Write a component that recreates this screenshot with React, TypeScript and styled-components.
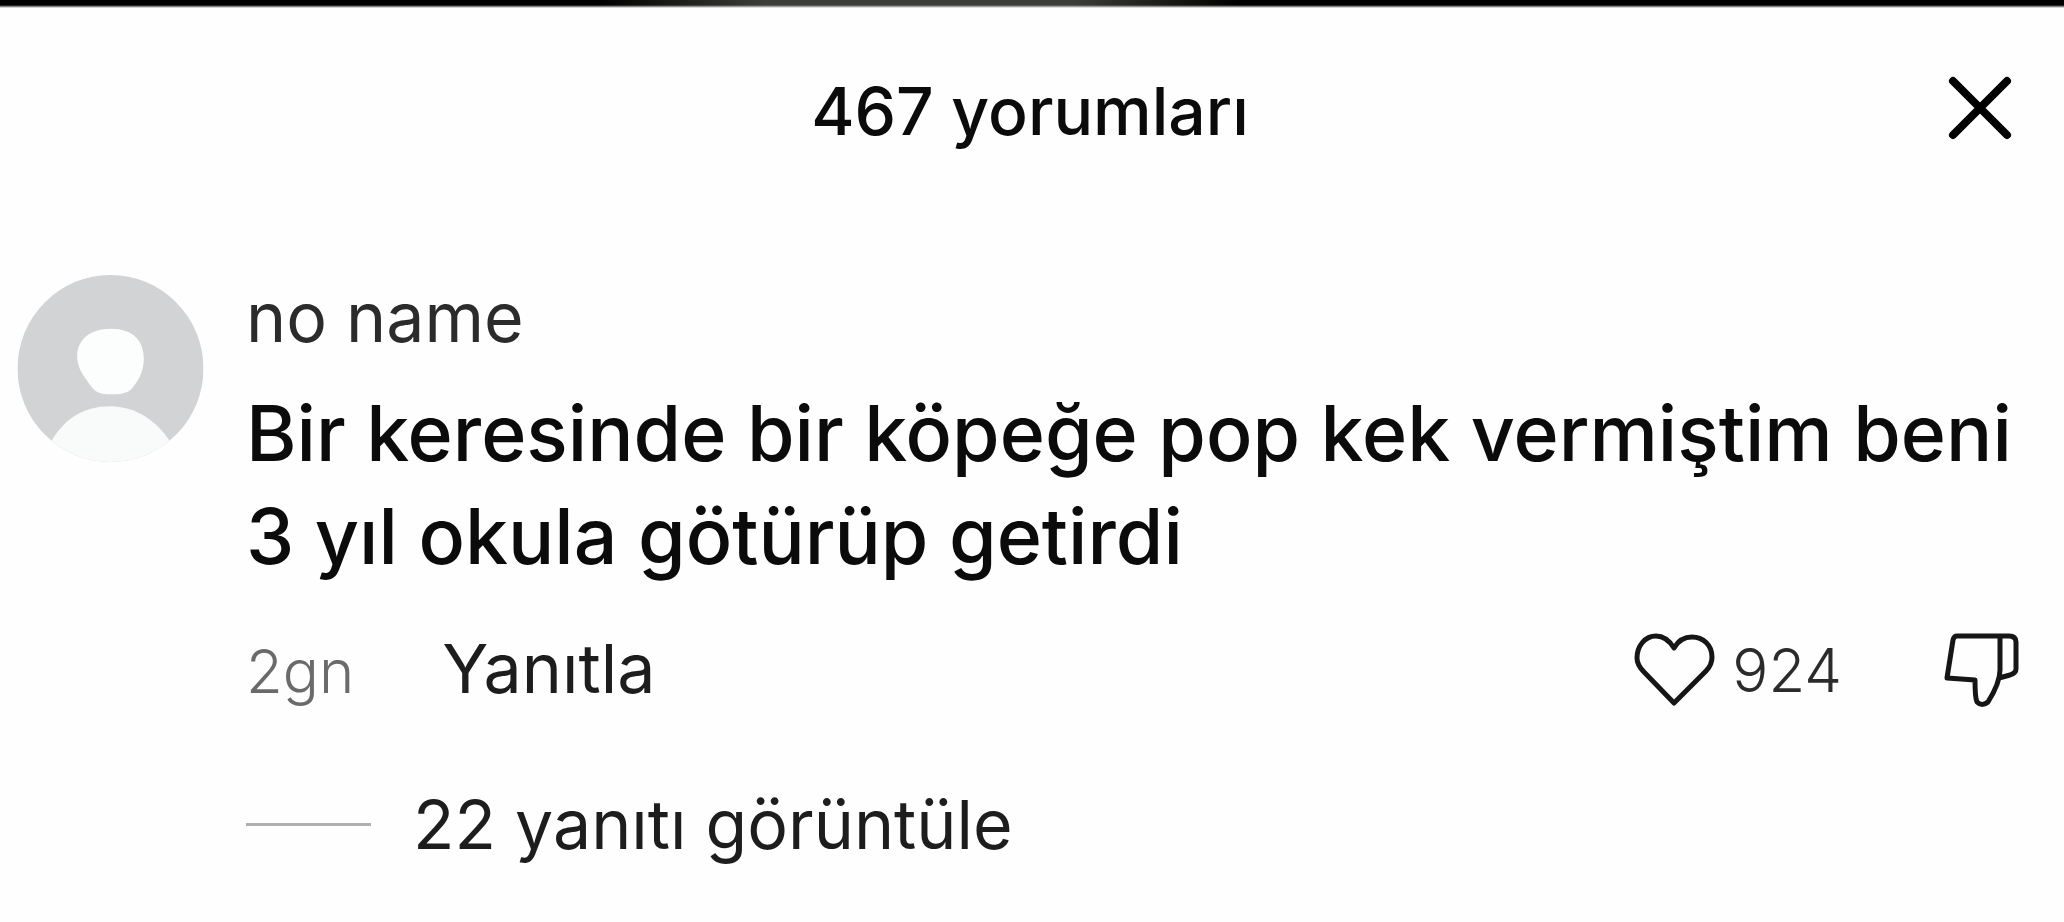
import React from "react";
import styled, { createGlobalStyle } from "styled-components";

const GlobalStyle = createGlobalStyle`
  *, *::before, *::after { box-sizing: border-box; }
  body {
    margin: 0;
    background: #fefefe;
    color: #0b0b0b;
    font-family: Inter, "Noto Sans", sans-serif;
  }
`;

const Sheet = styled.main`
  min-height: 100vh;
  background: #fefefe;
`;

const TopEdge = styled.div`
  height: 8px;
  background:
    linear-gradient(180deg, transparent 0, transparent 5px, #fefefe 8px),
    linear-gradient(90deg, #000 0%, #000 29%, #3c3c38 37%, #3c3c38 52%, #000 60%, #000 100%);
`;

const Header = styled.header`
  display: grid;
  grid-template-columns: 1fr auto 1fr;
  align-items: start;
  padding: 63px 50px 0 46px;
`;

const Title = styled.h1`
  grid-column: 2;
  margin: 0;
  font-size: 66px;
  line-height: 80px;
  font-weight: 500;
`;

const IconButton = styled.button`
  display: inline-flex;
  align-items: center;
  padding: 0;
  border: 0;
  background: none;
  color: inherit;
  cursor: pointer;
`;

const CloseButton = styled(IconButton)`
  justify-self: end;
  height: 74px;
`;

const Comment = styled.article`
  display: flex;
  align-items: flex-start;
  gap: 42px;
  padding: 124px 44px 0 17px;
`;

const Avatar = styled.svg`
  flex: none;
  width: 187px;
  height: 187px;
`;

const Body = styled.div`
  flex: 1;
  min-width: 0;
`;

const UserName = styled.h2`
  margin: 0;
  font-size: 68px;
  line-height: 84px;
  font-weight: 400;
  color: #2b2b2b;
`;

const Message = styled.p`
  margin: 23px 0 0;
  font-size: 77px;
  line-height: 103px;
  font-weight: 500;
`;

const Actions = styled.div`
  display: flex;
  align-items: center;
  justify-content: space-between;
  margin-top: 38px;
`;

const Meta = styled.div`
  display: flex;
  align-items: baseline;
  gap: 88px;
`;

const Age = styled.time`
  font-size: 60px;
  line-height: 84px;
  font-weight: 300;
  color: #6a6a6a;
`;

const TextButton = styled.button`
  padding: 0;
  border: 0;
  background: none;
  font: inherit;
  font-size: 68px;
  line-height: 84px;
  color: #1d1d1d;
  cursor: pointer;
`;

const Reactions = styled.div`
  display: flex;
  align-items: center;
  gap: 102px;
`;

const LikeButton = styled(IconButton)`
  gap: 16px;
`;

const LikeCount = styled.span`
  font-family: Inter, "Noto Sans", sans-serif;
  font-size: 60px;
  line-height: 84px;
  font-weight: 300;
  color: #2b2b2b;
`;

const Replies = styled.div`
  display: flex;
  align-items: center;
  gap: 42px;
  margin-top: 69px;
`;

const ReplyRule = styled.span`
  width: 125px;
  height: 3px;
  background: #b0b0b0;
`;

export default function App() {
  return (
    <Sheet>
      <GlobalStyle />
      <TopEdge />
      <Header>
        <Title>467 yorumları</Title>
        <CloseButton type="button" aria-label="Kapat">
          <svg width="66" height="66" viewBox="0 0 66 66" fill="none" stroke="#000" strokeWidth="8" strokeLinecap="round">
            <path d="M5 6 59 60M59 6 5 60" />
          </svg>
        </CloseButton>
      </Header>
      <Comment>
        <Avatar viewBox="0 0 187 188" aria-hidden="true">
          <defs>
            <clipPath id="avatar-circle">
              <ellipse cx="93.500" cy="94" rx="93.500" ry="94" />
            </clipPath>
          </defs>
          <g clipPath="url(#avatar-circle)">
            <rect width="187" height="188" fill="#d2d3d4" />
            <path d="M94 54C116 54 127 66 127 84C127 98 121 107 115 114C111 119 103 120 93 120C82 120 77 117 72 109C65 100 60 92 60 82C60 65 73 54 94 54Z" fill="#fcfefe" />
            <path d="M30 188V175C44 145 66 132 93 132C118 132 142 146 158 175V188Z" fill="#f9fafa" />
          </g>
        </Avatar>
        <Body>
          <UserName>no name</UserName>
          <Message>Bir keresinde bir köpeğe pop kek vermiştim beni 3 yıl okula götürüp getirdi</Message>
          <Actions>
            <Meta>
              <Age>2gn</Age>
              <TextButton type="button">Yanıtla</TextButton>
            </Meta>
            <Reactions>
              <LikeButton type="button" aria-label="Beğen 924">
                <svg width="82" height="74" viewBox="0 0 82 74" fill="none" stroke="#161616" strokeWidth="5" strokeLinejoin="round">
                  <path d="M40 15C35 7 28 3 22 3C11 3 3 13 3 25C3 31 6 35 10 39L40 70L72 38C76 34 78 30 78 24C78 12 69 4 58 4C50 4 44 8 40 15Z" />
                </svg>
                <LikeCount>924</LikeCount>
              </LikeButton>
              <IconButton type="button" aria-label="Beğenme">
                <svg width="76" height="76" viewBox="0 0 76 76" fill="none" stroke="#161616" strokeWidth="5" strokeLinejoin="round">
                  <path d="M13 4H65Q72 4 72 10V37Q72 41 66 43L55 46M56 4V38C56 50 49 62 44 70Q38 75 33 70Q31 66 31 48L3 46L9 8Q10 4 13 4Z" />
                </svg>
              </IconButton>
            </Reactions>
          </Actions>
          <Replies>
            <ReplyRule />
            <TextButton type="button">22 yanıtı görüntüle</TextButton>
          </Replies>
        </Body>
      </Comment>
    </Sheet>
  );
}
